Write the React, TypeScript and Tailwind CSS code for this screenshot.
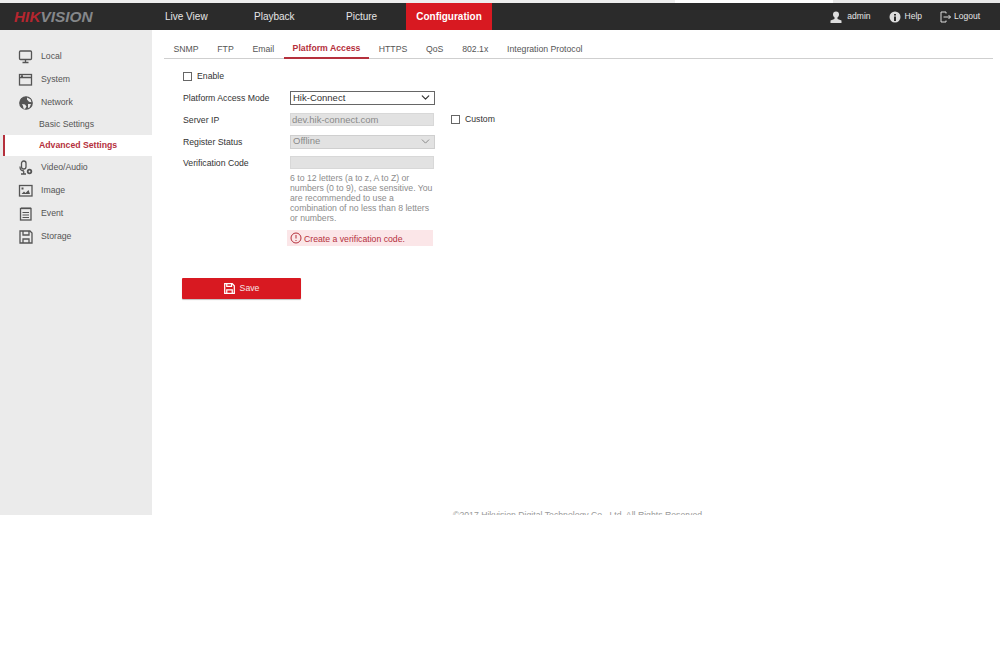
import { ChevronDown } from "lucide-react";

const font = "font-['Liberation_Sans',Arial,sans-serif]";

function Ico({ children }: { children: React.ReactNode }) {
  return (
    <svg width="16" height="16" viewBox="0 0 16 16" fill="none" stroke="#555" strokeWidth="1.3">
      {children}
    </svg>
  );
}

const navTop = [
  { label: "Local", icon: <Ico><rect x="1.500" y="2" width="12" height="8.500" rx="1" /><path d="M7.500 10.500v2.500M4.500 13.500h6" /></Ico> },
  { label: "System", icon: <Ico><rect x="1.500" y="2.500" width="12" height="10.500" /><path d="M1.500 5.500h12M3 4h2" /></Ico> },
  { label: "Network", icon: <Ico><circle cx="8" cy="8" r="6.200" fill="#555" /><path fill="#ebebeb" stroke="none" d="M9 2.500l3.500 1.800 1 3-2.500-.5-2-2.300zM4 9l3 .5 1.500 2-1.500 2.500-1.500-.5-.5-2.500zM10 9h3l-1.500 3.500-1.500.5z" /></Ico> },
];
const navBottom = [
  { label: "Video/Audio", icon: <Ico><rect x="3.500" y="1" width="4.500" height="8" rx="2.200" /><path d="M2 6.500c0 3 1.800 4.500 4 4.500M5.700 11v2.500M3 14h5" /><circle cx="11.500" cy="11.500" r="2.700" fill="#555" stroke="none" /><circle cx="11.500" cy="11.500" r=".9" fill="#ebebeb" stroke="none" /></Ico> },
  { label: "Image", icon: <Ico><rect x="1.500" y="2.500" width="12.500" height="10.500" /><path fill="#555" stroke="none" d="M3.500 11l2.500-2.500 1.500 1.500 3-3 1.500 4zM3.500 4.500h2v2h-2z" /></Ico> },
  { label: "Event", icon: <Ico><rect x="2.500" y="2.500" width="10.500" height="11.500" /><path d="M4 1v2M6 1v2M8 1v2M10 1v2M12 1v2M4.500 6.500h6.500M4.500 9h6.500M4.500 11.500h6.500" strokeWidth="1" /></Ico> },
  { label: "Storage", icon: <Ico><path d="M2 2h10l2 2v10H2z" /><path d="M5 2v4h6V2M5 14v-4h6v4" /></Ico> },
];

function NavRow({ label, icon, h }: { label: string; icon: React.ReactNode; h: string }) {
  return (
    <div className={`flex items-center pl-[18px] gap-[7px] ${h}`}>
      <span className="w-[16px] h-[16px] flex shrink-0">{icon}</span>
      <span className="text-[8.700px] text-[#555] leading-none">{label}</span>
    </div>
  );
}

const tabs = ["SNMP", "FTP", "Email", "Platform Access", "HTTPS", "QoS", "802.1x", "Integration Protocol"];

function Box() {
  return <span className="block w-[9px] h-[9px] border border-[#666] bg-white shrink-0" />;
}

function Row({ label, children, h }: { label: string; children: React.ReactNode; h: string }) {
  return (
    <div className={`flex items-center ${h}`}>
      <span className="w-[107px] shrink-0 pt-[1px] text-[8.700px] text-[#333] leading-none">{label}</span>
      {children}
    </div>
  );
}

export default function App() {
  return (
    <div className={`${font} w-[1000px] h-[645px] bg-white overflow-hidden`}>
      <div className="h-[3px] flex bg-white">
        <div className="w-[675px] bg-[#eeeeee]" />
        <div className="w-[158px] bg-white" />
        <div className="flex-1 bg-[#e8e8e8]" />
      </div>
      <header className="h-[27px] bg-[#2b2b2b] flex items-stretch">
        <div className="w-[165px] pl-[14px] flex items-center italic font-bold text-[15.400px] leading-none">
          <span className="text-[#b5262f]">HIK</span>
          <span className="text-[#85878a]">VISION</span>
        </div>
        <div className="flex items-center text-[10px] text-[#e6e6e6] w-[241px] leading-none">
          <span className="w-[89px]">Live View</span>
          <span className="w-[92px]">Playback</span>
          <span>Picture</span>
        </div>
        <div className="w-[86px] bg-[#d81921] flex items-center justify-center text-white font-bold text-[10px] leading-none">Configuration</div>
        <div className="flex-1 flex items-center justify-end pr-[20px] text-[8.500px] text-[#e6e6e6] leading-none">
          <svg width="14" height="12" viewBox="0 0 14 12" fill="#ddd" className="mr-[4px]"><circle cx="7" cy="3.500" r="3" /><path d="M5.500 6h3v2l4 1.500V12H1.500V9.500l4-1.500z" /></svg>
          <span className="mr-[18px]">admin</span>
          <svg width="12" height="12" viewBox="0 0 12 12" className="mr-[4px]"><circle cx="6" cy="6" r="5.500" fill="#ddd" /><path d="M5 3h2v1.500H5zM5 5.500h2V10H5z" fill="#2b2b2b" /></svg>
          <span className="mr-[18px]">Help</span>
          <svg width="12" height="12" viewBox="0 0 12 12" fill="none" stroke="#ddd" className="mr-[2px]"><path d="M6 2.500V1H1v10h5V9.500M3.500 6h7M8.500 4l2 2-2 2" /></svg>
          <span>Logout</span>
        </div>
      </header>
      <div className="h-[485px] flex overflow-hidden">
        <aside className="w-[152px] shrink-0 bg-[#ebebeb] pt-[15px]">
          {navTop.map((n) => <NavRow key={n.label} label={n.label} icon={n.icon} h="h-[23px]" />)}
          <div className="h-[21px] pl-[39px] flex items-center text-[8.700px] text-[#555] leading-none">Basic Settings</div>
          <div className="h-[21px] ml-[3px] pl-[34px] flex items-center bg-white border-l-[2px] border-[#b5303c] text-[8.700px] font-bold text-[#b5303c] leading-none">Advanced Settings</div>
          {navBottom.map((n) => <NavRow key={n.label} label={n.label} icon={n.icon} h="h-[23px]" />)}
        </aside>
        <main className="flex-1 flex flex-col relative">
          <nav className="ml-[12px] mr-[7px] h-[29px] border-b border-[#cfcfcf] flex items-end text-[8.700px] text-[#555] leading-none">
            {tabs.map((t) =>
              t === "Platform Access" ? (
                <span key={t} className="h-[28px] px-[9px] flex items-center pt-[8px] font-bold text-[#b5303c] border-b-[2px] border-[#b5303c] -mb-px">{t}</span>
              ) : (
                <span key={t} className="h-[28px] px-[9.400px] flex items-center pt-[10px]">{t}</span>
              )
            )}
          </nav>
          <div className="pl-[31px] pt-[7px] flex flex-col">
            <div className="flex items-center h-[21px] gap-[5px]">
              <Box />
              <span className="text-[8.700px] text-[#333] leading-none">Enable</span>
            </div>
            <Row label="Platform Access Mode" h="h-[21px]">
              <div className="w-[145px] h-[14px] border border-[#666] bg-white flex items-center justify-between px-[2px] text-[9.500px] text-[#333] leading-none">
                Hik-Connect
                <ChevronDown size={13} strokeWidth={2.200} color="#333" />
              </div>
            </Row>
            <Row label="Server IP" h="h-[23px]">
              <div className="w-[144px] h-[13px] bg-[#e2e2e2] border border-[#d8d8d8] flex items-center px-[1px] text-[9.500px] text-[#8a8a8a] leading-none">dev.hik-connect.com</div>
              <span className="ml-[17px] mr-[5px]"><Box /></span>
              <span className="text-[8.700px] text-[#333] leading-none">Custom</span>
            </Row>
            <Row label="Register Status" h="h-[21px]">
              <div className="w-[145px] h-[14px] bg-[#e2e2e2] border border-[#cfcfcf] flex items-center justify-between px-[2px] pb-[1px] text-[9.500px] text-[#8a8a8a] leading-none">
                Offline
                <ChevronDown size={13} strokeWidth={1.800} color="#888" />
              </div>
            </Row>
            <Row label="Verification Code" h="h-[21px]">
              <div className="w-[144px] h-[13px] bg-[#e2e2e2] border border-[#d8d8d8]" />
            </Row>
            <p className="ml-[107px] w-[146px] text-[8.700px] leading-[10px] text-[#8c8c8c]">6 to 12 letters (a to z, A to Z) or numbers (0 to 9), case sensitive. You are recommended to use a combination of no less than 8 letters or numbers.</p>
            <div className="ml-[104px] mt-[7px] w-[146px] h-[16px] bg-[#fbe6e8] flex items-center pl-[3px] gap-[2px] text-[8.700px] text-[#b5303c] leading-none">
              <svg width="12" height="12" viewBox="0 0 12 12" fill="none" stroke="#b5303c"><circle cx="6" cy="6" r="5" /><path d="M6 3v3.500M6 8v1" /></svg>
              <span className="pt-[3px]">Create a verification code.</span>
            </div>
            <button className="mt-[32px] -ml-px w-[119px] h-[21px] bg-[#d81921] rounded-[1px] shadow-[0_1px_1px_rgba(0,0,0,0.25)] flex items-center justify-center gap-[5px] text-[8.700px] text-[#f5e5e5] leading-none">
              <svg width="11" height="11" viewBox="0 0 16 16" fill="none" stroke="#fff" strokeWidth="1.800"><path d="M1 1h11l3 3v11H1z" /><path d="M4 1v4h7V1M4 15v-5h8v5" /></svg>
              Save
            </button>
          </div>
          <div className="absolute left-[301px] top-[481px] text-[8.700px] text-[#999] leading-none whitespace-nowrap">©2017 Hikvision Digital Technology Co., Ltd. All Rights Reserved.</div>
        </main>
      </div>
    </div>
  );
}
